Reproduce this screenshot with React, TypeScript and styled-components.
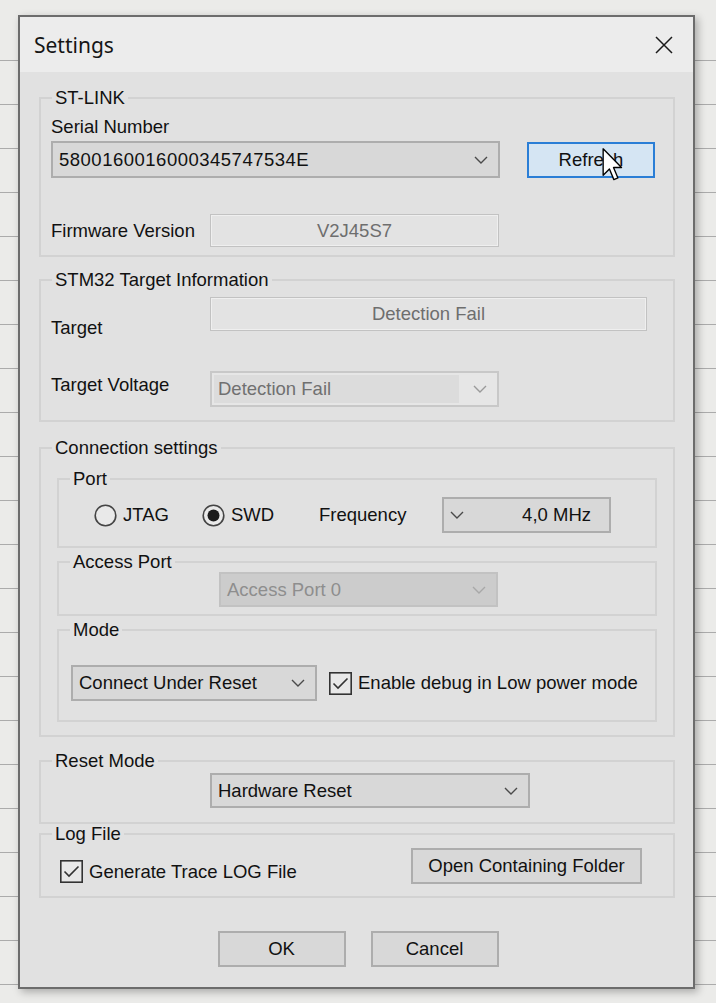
import React from 'react'
import styled, { createGlobalStyle } from 'styled-components'

const GlobalStyle = createGlobalStyle`
  html, body {
    margin: 0;
    padding: 0;
  }
  body {
    width: 716px;
    height: 1003px;
    overflow: hidden;
    background-color: #ebebe9;
    background-image: repeating-linear-gradient(
      to bottom,
      transparent 0,
      transparent 43px,
      #ababab 43px,
      #ababab 44px
    );
    background-position: 0 17px;
    font-family: 'Liberation Sans', Arial, sans-serif;
  }
`

const Page = styled.div`
  padding: 15px 0 0 18px;
`

const Dialog = styled.div`
  box-sizing: border-box;
  width: 677px;
  height: 974px;
  border: 2px solid #6c6c6c;
  background: #e1e1e1;
  box-shadow: 3px 3px 8px rgba(0, 0, 0, 0.28);
  display: flex;
  flex-direction: column;
`

const TitleBar = styled.div`
  height: 55px;
  background: #ececec;
  display: flex;
  align-items: center;
  justify-content: space-between;
  padding: 0 20px 0 14px;
`

const Title = styled.span`
  font-family: 'Noto Sans', 'Liberation Sans', sans-serif;
  font-size: 21px;
  color: #151515;
`

const Body = styled.div`
  padding: 16px 18px 0 19px;
  display: flex;
  flex-direction: column;
`

const Group = styled.fieldset<{ $mt?: number }>`
  box-sizing: border-box;
  min-width: 0;
  margin: ${(p) => p.$mt ?? 0}px 0 0;
  padding: 0;
  border: 2px solid #d2d2d2;
`

const Legend = styled.legend`
  margin-left: 11px;
  padding: 0 3px;
  font-size: 18.5px;
  line-height: 20px;
  color: #111;
`

const GroupBody = styled.div<{ $pad: string }>`
  padding: ${(p) => p.$pad};
`

const Row = styled.div<{ $mt?: number; $align?: string }>`
  display: flex;
  align-items: ${(p) => p.$align ?? 'center'};
  margin-top: ${(p) => p.$mt ?? 0}px;
`

const Label = styled.span<{ $w?: number; $pt?: number }>`
  display: block;
  flex: none;
  ${(p) => (p.$w ? `width: ${p.$w}px;` : '')}
  padding-top: ${(p) => p.$pt ?? 0}px;
  font-size: 18.5px;
  line-height: 20px;
  color: #111;
  white-space: nowrap;
`

type Tone = 'normal' | 'disabled' | 'dim'

const comboBg: Record<Tone, string> = {
  normal: '#d8d8d8',
  disabled: '#e6e6e6',
  dim: '#cccccc',
}
const comboBorder: Record<Tone, string> = {
  normal: '#adadad',
  disabled: '#c8c8c8',
  dim: '#c2c2c2',
}
const comboText: Record<Tone, string> = {
  normal: '#111',
  disabled: '#707070',
  dim: '#8e8e8e',
}

const ComboBox = styled.div<{ $w: number; $h: number; $tone: Tone }>`
  box-sizing: border-box;
  flex: none;
  width: ${(p) => p.$w}px;
  height: ${(p) => p.$h}px;
  border: 2px solid ${(p) => comboBorder[p.$tone]};
  background: ${(p) => comboBg[p.$tone]};
  color: ${(p) => comboText[p.$tone]};
  display: flex;
  align-items: center;
  padding: 0 10px 0 6px;
  font-size: 18.5px;
  white-space: nowrap;
`

const ComboText = styled.span<{ $fill?: boolean; $spacing?: number }>`
  flex: 1;
  align-self: stretch;
  display: flex;
  align-items: center;
  letter-spacing: ${(p) => p.$spacing ?? 0}px;
  ${(p) => (p.$fill ? 'background: #dcdcdc; margin: 2px 14px 2px -4px; padding-left: 4px;' : '')}
`

const FreqValue = styled.span`
  flex: 1;
  text-align: right;
  padding-right: 8px;
`

const ReadOnly = styled.div<{ $w: number; $h: number }>`
  box-sizing: border-box;
  flex: none;
  width: ${(p) => p.$w}px;
  height: ${(p) => p.$h}px;
  border: 1px solid #c2c2c2;
  box-shadow: inset 0 0 0 1px #efefef;
  background: #e3e3e3;
  color: #6e6e6e;
  display: flex;
  align-items: center;
  justify-content: center;
  font-size: 18.5px;
`

const Button = styled.button<{ $w: number; $hot?: boolean }>`
  position: relative;
  box-sizing: border-box;
  flex: none;
  width: ${(p) => p.$w}px;
  height: 36px;
  border: 2px solid ${(p) => (p.$hot ? '#2a7ed6' : '#adadad')};
  background: ${(p) => (p.$hot ? '#d5e5f3' : '#d8d8d8')};
  color: #111;
  font-family: 'Liberation Sans', Arial, sans-serif;
  font-size: 18.5px;
  padding: 0;
  border-radius: 0;
`

const Cursor = styled.svg`
  position: absolute;
  left: 73px;
  top: 4px;
`

const Choice = styled.label<{ $w?: number }>`
  display: flex;
  align-items: center;
  gap: 6px;
  flex: none;
  ${(p) => (p.$w ? `width: ${p.$w}px;` : '')}
  font-size: 18.5px;
  line-height: 20px;
  color: #111;
  white-space: nowrap;
`

const Footer = styled.div`
  display: flex;
  justify-content: center;
  gap: 25px;
  margin-top: 33px;
  padding-left: 2px;
`

const Chevron = ({ color = '#4a4a4a' }: { color?: string }) => (
  <svg width="14" height="8" viewBox="0 0 14 8">
    <polyline points="1,1 7,7 13,1" fill="none" stroke={color} strokeWidth="1.4" />
  </svg>
)

const Radio = ({ checked }: { checked?: boolean }) => (
  <svg width="23" height="23" viewBox="0 0 23 23">
    <circle cx="11.5" cy="11.5" r="10.3" fill="#e9e9e9" stroke="#444" strokeWidth="1.6" />
    {checked && <circle cx="11.5" cy="11.5" r="6" fill="#1c1c1c" />}
  </svg>
)

const Check = () => (
  <svg width="23" height="23" viewBox="0 0 23 23">
    <rect x="0.8" y="0.8" width="21.4" height="21.4" fill="#e8e8e8" stroke="#333" strokeWidth="1.6" />
    <polyline points="4.5,11.5 9,16 18.5,6.5" fill="none" stroke="#333" strokeWidth="1.6" />
  </svg>
)

export default function App() {
  return (
    <>
      <GlobalStyle />
      <Page>
        <Dialog>
          <TitleBar>
            <Title>Settings</Title>
            <svg width="18" height="18" viewBox="0 0 18 18">
              <path d="M1 1 L17 17 M17 1 L1 17" stroke="#1a1a1a" strokeWidth="1.5" />
            </svg>
          </TitleBar>

          <Body>
            <Group>
              <Legend>ST-LINK</Legend>
              <GroupBody $pad="9px 10px 8px 10px">
                <Label>Serial Number</Label>
                <Row $mt={4}>
                  <ComboBox $w={449} $h={37} $tone="normal">
                    <ComboText $spacing={0.5}>5800160016000345747534E</ComboText>
                    <Chevron />
                  </ComboBox>
                  <Button $w={128} $hot style={{ marginLeft: 27 }}>
                    Refresh
                    <Cursor width="21" height="34" viewBox="0 0 12 20">
                      <path
                        d="M0.5 0.5 L0.5 16 L4.2 12.4 L6.8 18.6 L9.2 17.6 L6.6 11.5 L11.3 11.5 Z"
                        fill="#fff"
                        stroke="#000"
                        strokeWidth="0.8"
                        strokeLinejoin="round"
                      />
                    </Cursor>
                  </Button>
                </Row>
                <Row $mt={36}>
                  <Label $w={159}>Firmware Version</Label>
                  <ReadOnly $w={289} $h={33}>V2J45S7</ReadOnly>
                </Row>
              </GroupBody>
            </Group>

            <Group $mt={13}>
              <Legend>STM32 Target Information</Legend>
              <GroupBody $pad="7px 10px 13px 10px">
                <Row $align="flex-start">
                  <Label $w={159} $pt={21}>Target</Label>
                  <ReadOnly $w={437} $h={34}>Detection Fail</ReadOnly>
                </Row>
                <Row $align="flex-start" $mt={33}>
                  <Label $w={159} $pt={4}>Target Voltage</Label>
                  <ComboBox $w={289} $h={36} $tone="disabled">
                    <ComboText $fill>Detection Fail</ComboText>
                    <Chevron color="#9a9a9a" />
                  </ComboBox>
                </Row>
              </GroupBody>
            </Group>

            <Group $mt={16}>
              <Legend>Connection settings</Legend>
              <GroupBody $pad="11px 16px 13px 16px">
                <Group>
                  <Legend>Port</Legend>
                  <GroupBody $pad="8px 10px 13px 35px">
                    <Row>
                      <Choice $w={108}>
                        <Radio />
                        JTAG
                      </Choice>
                      <Choice $w={117}>
                        <Radio checked />
                        SWD
                      </Choice>
                      <Label $w={123}>Frequency</Label>
                      <ComboBox $w={169} $h={36} $tone="normal">
                        <Chevron />
                        <FreqValue>4,0 MHz</FreqValue>
                      </ComboBox>
                    </Row>
                  </GroupBody>
                </Group>

                <Group $mt={4}>
                  <Legend>Access Port</Legend>
                  <GroupBody $pad="0 10px 7px 160px">
                    <ComboBox $w={279} $h={35} $tone="dim">
                      <ComboText>Access Port 0</ComboText>
                      <Chevron color="#a8a8a8" />
                    </ComboBox>
                  </GroupBody>
                </Group>

                <Group $mt={4}>
                  <Legend>Mode</Legend>
                  <GroupBody $pad="25px 10px 19px 12px">
                    <Row>
                      <ComboBox $w={246} $h={36} $tone="normal">
                        <ComboText>Connect Under Reset</ComboText>
                        <Chevron />
                      </ComboBox>
                      <Choice style={{ marginLeft: 12 }}>
                        <Check />
                        Enable debug in Low power mode
                      </Choice>
                    </Row>
                  </GroupBody>
                </Group>
              </GroupBody>
            </Group>

            <Group $mt={14}>
              <Legend>Reset Mode</Legend>
              <GroupBody $pad="2px 10px 14px 169px">
                <ComboBox $w={320} $h={35} $tone="normal">
                  <ComboText>Hardware Reset</ComboText>
                  <Chevron />
                </ComboBox>
              </GroupBody>
            </Group>

            <Group>
              <Legend>Log File</Legend>
              <GroupBody $pad="4px 31px 12px 19px">
                <Row $align="flex-start">
                  <Choice style={{ marginTop: 12 }}>
                    <Check />
                    Generate Trace LOG File
                  </Choice>
                  <Button $w={231} style={{ marginLeft: 'auto' }}>
                    Open Containing Folder
                  </Button>
                </Row>
              </GroupBody>
            </Group>

            <Footer>
              <Button $w={128}>OK</Button>
              <Button $w={128}>Cancel</Button>
            </Footer>
          </Body>
        </Dialog>
      </Page>
    </>
  )
}
